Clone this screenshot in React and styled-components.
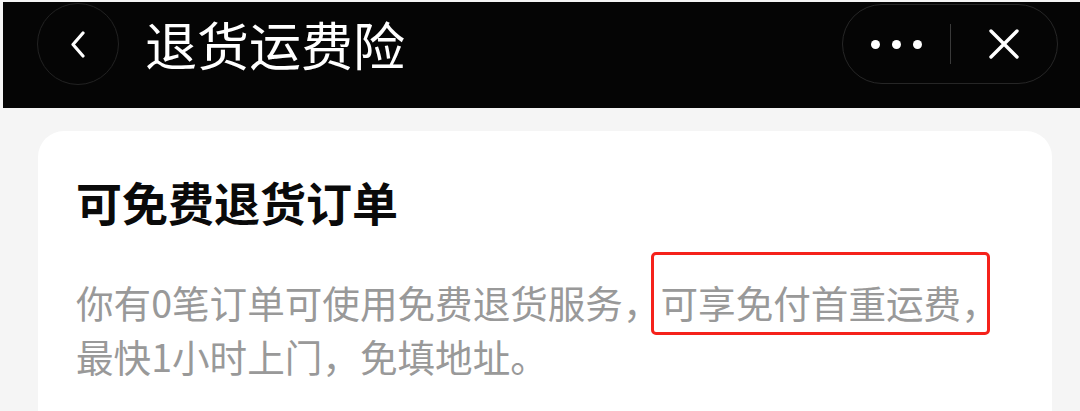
import React from 'react'
import styled, { createGlobalStyle } from 'styled-components'

const GlobalStyle = createGlobalStyle`
  html, body {
    margin: 0;
    padding: 0;
    background: #f5f5f5;
  }
  body {
    font-family: "Noto Sans CJK SC", "Noto Sans", sans-serif;
  }
`;

const Page = styled.div`
  width: 1080px;
  height: 411px;
  box-sizing: border-box;
  padding: 2px 0 0 3px;
  background: #f5f5f5;
  overflow: hidden;
  display: flex;
  flex-direction: column;
`;

const NavBar = styled.div`
  height: 106px;
  box-sizing: border-box;
  background: #050505;
  padding: 1px 22px 23px 34px;
  display: flex;
  align-items: center;
`;

const BackButton = styled.div`
  width: 82px;
  height: 82px;
  box-sizing: border-box;
  border-radius: 50%;
  border: 1.5px solid #222;
  display: flex;
  align-items: center;
  justify-content: center;
  flex-shrink: 0;
`;

const Title = styled.div`
  margin-left: 26px;
  color: #fff;
  font-size: 52px;
  font-weight: 400;
  line-height: 1;
  flex: 1;
`;

const Capsule = styled.div`
  width: 216px;
  height: 80px;
  box-sizing: border-box;
  border-radius: 40px;
  border: 1.5px solid #262626;
  display: flex;
  align-items: center;
`;

const CapsuleHalf = styled.div`
  flex: 1;
  height: 100%;
  display: flex;
  align-items: center;
  justify-content: center;
  gap: ${({ $gap }) => $gap || 0}px;
`;

const Dot = styled.span`
  width: 9px;
  height: 9px;
  border-radius: 50%;
  background: #fff;
`;

const Divider = styled.div`
  width: 1px;
  height: 40px;
  background: #3a3a3a;
`;

const Card = styled.div`
  margin: 23px 28px 0 35px;
  flex: 1;
  background: #fff;
  border-radius: 26px 26px 0 0;
  padding: 41px 38px 0 38px;
`;

const Heading = styled.div`
  font-size: 46px;
  font-weight: 700;
  color: #0a0a0a;
  line-height: 58px;
`;

const Desc = styled.div`
  margin-top: 45px;
  font-size: 37.6px;
  line-height: 54px;
  color: #999;
`;

// red annotation frame drawn over the highlighted phrase
const Marked = styled.span`
  position: relative;
  &::after {
    content: '';
    position: absolute;
    left: -10px;
    right: 9px;
    top: -22px;
    bottom: -6px;
    border: 3px solid #f5221b;
    border-radius: 5px;
  }
`;

const App = () => {
  return (
    <Page>
      <GlobalStyle />
      <NavBar>
        <BackButton>
          <svg width="16" height="27" viewBox="0 0 16 27" fill="none">
            <path d="M13 2 L3 13.5 L13 25" stroke="#fff" strokeWidth="3.2" strokeLinecap="round" strokeLinejoin="round" />
          </svg>
        </BackButton>
        <Title>退货运费险</Title>
        <Capsule>
          <CapsuleHalf $gap={12}>
            <Dot />
            <Dot />
            <Dot />
          </CapsuleHalf>
          <Divider />
          <CapsuleHalf>
            <svg width="32" height="32" viewBox="0 0 32 32" fill="none">
              <path d="M3 3 L29 29 M29 3 L3 29" stroke="#fff" strokeWidth="3.4" strokeLinecap="round" />
            </svg>
          </CapsuleHalf>
        </Capsule>
      </NavBar>
      <Card>
        <Heading>可免费退货订单</Heading>
        <Desc>
          你有0笔订单可使用免费退货服务，<Marked>可享免付首重运费，</Marked>
          <br />
          最快1小时上门，免填地址。
        </Desc>
      </Card>
    </Page>
  )
}

export default App;
